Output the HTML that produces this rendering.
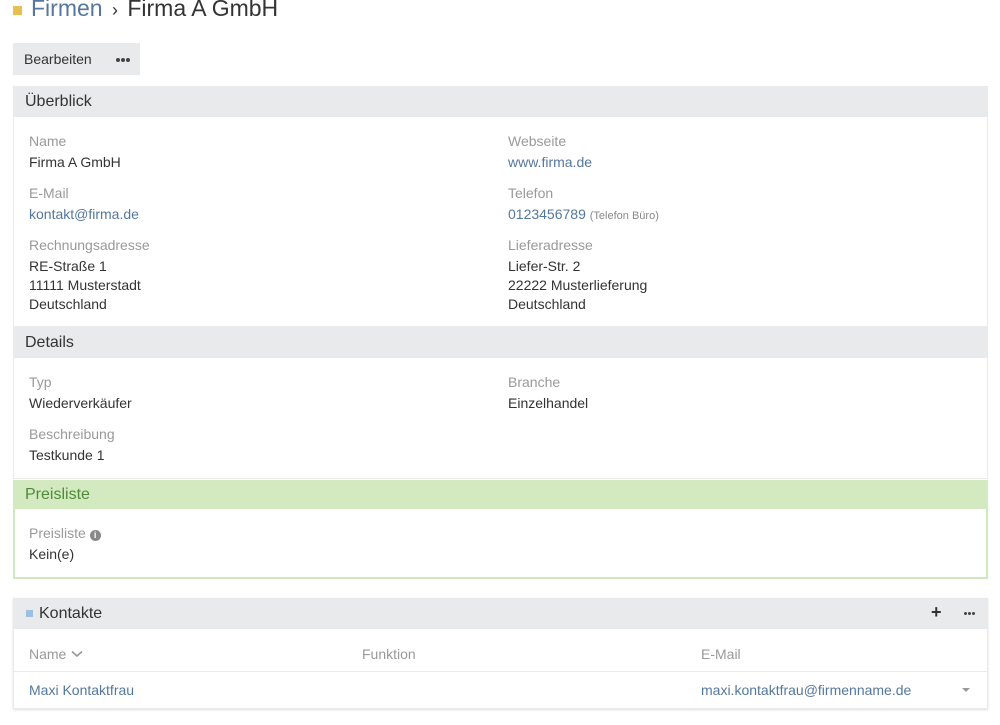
<!DOCTYPE html>
<html><head><meta charset="utf-8"><style>
*{margin:0;padding:0;box-sizing:border-box}
body{width:1000px;height:725px;background:#fff;font-family:"Liberation Sans",sans-serif;font-size:14px;color:#333;position:relative;overflow:hidden}
.a{position:absolute;white-space:nowrap}
.l{color:#999}
.k{color:#55779e}
.hd{position:absolute;left:13px;width:975px;background:#e8eaeb;font-size:16px;color:#333;padding-left:12px}
.bx{position:absolute;left:13px;width:975px;background:#fff;border:1px solid #e8eaeb}
.d{position:absolute;width:4px;height:4px;border-radius:50%;background:#444}
</style></head><body>
<div class="a" style="left:13px;top:6px;width:9px;height:9px;background:#e8c050"></div>
<div class="a" style="left:31px;top:-5px;font-size:23px;"><span class="k">Firmen</span> <span style="color:#333;font-size:18px;margin:0 3px">›</span> <span>Firma A GmbH</span></div>
<div class="a" style="left:13px;top:43px;width:127px;height:32px;background:#e8eaeb;"></div>
<div class="a" style="left:24px;top:51px;">Bearbeiten</div>
<div class="d" style="left:116px;top:58px"></div><div class="d" style="left:121px;top:58px"></div><div class="d" style="left:126px;top:58px"></div>

<div class="bx" style="top:86px;height:241px"></div>
<div class="hd" style="top:86px;height:31px;line-height:31px">Überblick</div>
<div class="a l" style="left:29px;top:133px">Name</div>
<div class="a" style="left:29px;top:154px">Firma A GmbH</div>
<div class="a l" style="left:29px;top:185px">E-Mail</div>
<div class="a k" style="left:29px;top:206px">kontakt@firma.de</div>
<div class="a l" style="left:29px;top:237px">Rechnungsadresse</div>
<div class="a" style="left:29px;top:257px;line-height:19px">RE-Straße 1<br>11111 Musterstadt<br>Deutschland</div>
<div class="a l" style="left:508px;top:133px">Webseite</div>
<div class="a k" style="left:508px;top:154px">www.firma.de</div>
<div class="a l" style="left:508px;top:185px">Telefon</div>
<div class="a" style="left:508px;top:206px"><span class="k">0123456789</span> <span style="color:#888;font-size:11px">(Telefon Büro)</span></div>
<div class="a l" style="left:508px;top:237px">Lieferadresse</div>
<div class="a" style="left:508px;top:257px;line-height:19px">Liefer-Str. 2<br>22222 Musterlieferung<br>Deutschland</div>

<div class="bx" style="top:327px;height:152px"></div>
<div class="hd" style="top:327px;height:31px;line-height:31px">Details</div>
<div class="a l" style="left:29px;top:374px">Typ</div>
<div class="a" style="left:29px;top:395px">Wiederverkäufer</div>
<div class="a l" style="left:29px;top:426px">Beschreibung</div>
<div class="a" style="left:29px;top:447px">Testkunde 1</div>
<div class="a l" style="left:508px;top:374px">Branche</div>
<div class="a" style="left:508px;top:395px">Einzelhandel</div>

<div class="bx" style="top:480px;height:99px;border:2px solid #d0e8c0"></div>
<div class="hd" style="top:480px;height:29px;line-height:29px;background:#d3eac0;color:#4e8a3a">Preisliste</div>
<div class="a l" style="left:29px;top:525px">Preisliste <span style="display:inline-block;width:11px;height:11px;border-radius:50%;background:#888;color:#fff;font-size:9px;line-height:11px;text-align:center;font-weight:bold;vertical-align:0">i</span></div>
<div class="a" style="left:29px;top:546px">Kein(e)</div>

<div class="bx" style="top:598px;height:111px;box-shadow:0 1px 2px #ddd"></div>
<div class="hd" style="top:598px;height:31px;line-height:31px;padding-left:26px">Kontakte</div>
<div class="a" style="left:26px;top:610px;width:7px;height:7px;background:#9cc0de"></div>
<div class="a" style="left:931px;top:602px;font-size:18px;font-weight:bold">+</div>
<div class="d" style="left:964px;top:612px;width:3px;height:3px"></div><div class="d" style="left:968px;top:612px;width:3px;height:3px"></div><div class="d" style="left:972px;top:612px;width:3px;height:3px"></div>
<div class="a l" style="left:29px;top:646px">Name</div>
<svg class="a" style="left:71px;top:650px" width="12" height="8"><path d="M1 1.5L6 6L11 1.5" stroke="#999" stroke-width="1.6" fill="none"/></svg>
<div class="a l" style="left:362px;top:646px">Funktion</div>
<div class="a l" style="left:701px;top:646px">E-Mail</div>
<div class="a" style="left:14px;top:671px;width:973px;height:1px;background:#e8eaeb"></div>
<div class="a k" style="left:29px;top:682px">Maxi Kontaktfrau</div>
<div class="a k" style="left:701px;top:682px">maxi.kontaktfrau@firmenname.de</div>
<div class="a" style="left:962px;top:688px;border-left:4px solid transparent;border-right:4px solid transparent;border-top:4px solid #999"></div>
</body></html>
